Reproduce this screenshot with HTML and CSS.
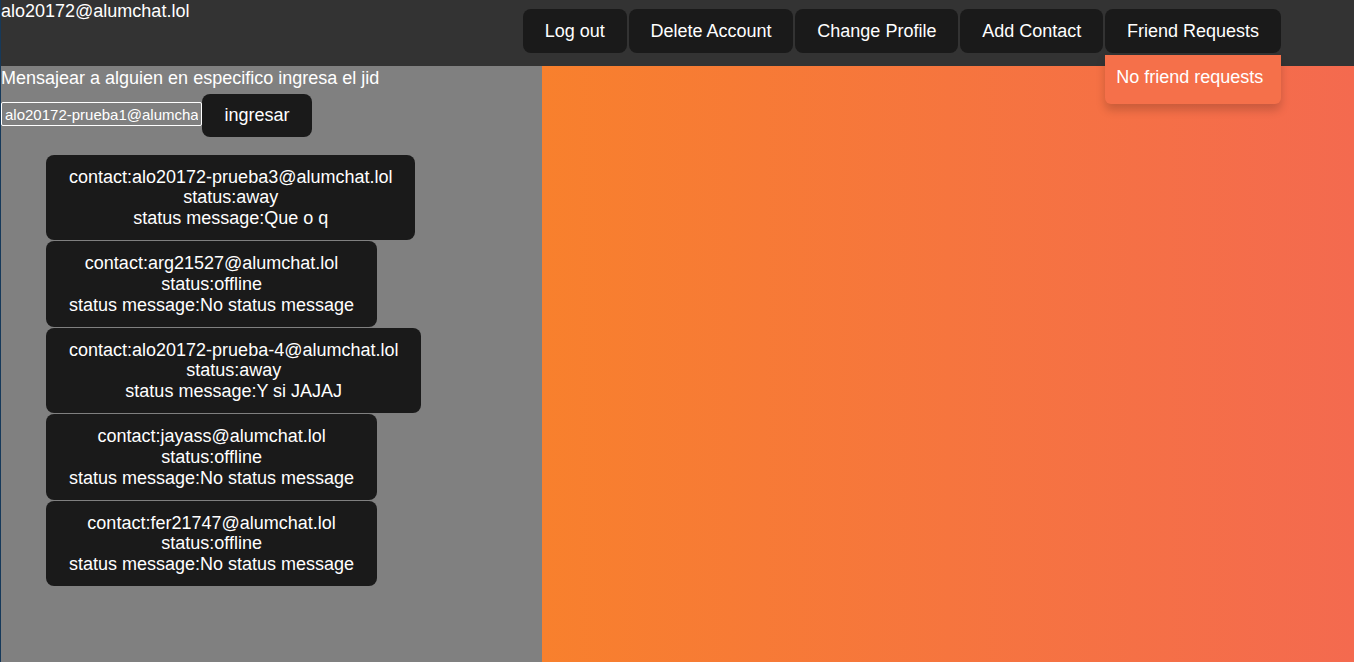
FILE: index.html
```html
<!DOCTYPE html>
<html>
<head>
<meta charset="utf-8">
<link rel="stylesheet" href="styles.css">
</head>
<body>
<div class="app">
  <header class="topbar">
    <div class="user">alo20172@alumchat.lol</div>
    <nav class="actions">
      <button class="btn">Log out</button>
      <button class="btn">Delete Account</button>
      <button class="btn">Change Profile</button>
      <button class="btn">Add Contact</button>
      <div class="dropdown">
        <button class="btn">Friend Requests</button>
        <div class="menu">No friend requests</div>
      </div>
    </nav>
  </header>
  <main class="main">
    <section class="side">
      <div class="hint">Mensajear a alguien en especifico ingresa el jid</div>
      <div class="jidrow">
        <input class="jid" type="text" value="alo20172-prueba1@alumchat.lol">
        <button class="btn">ingresar</button>
      </div>
      <div class="contacts">
        <button class="card">contact:alo20172-prueba3@alumchat.lol<br>status:away<br>status message:Que o q</button>
        <button class="card">contact:arg21527@alumchat.lol<br>status:offline<br>status message:No status message</button>
        <button class="card">contact:alo20172-prueba-4@alumchat.lol<br>status:away<br>status message:Y si JAJAJ</button>
        <button class="card">contact:jayass@alumchat.lol<br>status:offline<br>status message:No status message</button>
        <button class="card">contact:fer21747@alumchat.lol<br>status:offline<br>status message:No status message</button>
      </div>
    </section>
    <section class="chat"></section>
  </main>
</div>
</body>
</html>
```
FILE: styles.css
```css
* { box-sizing: border-box; }
html, body { margin: 0; padding: 0; height: 100%; }
body {
  font-family: "Liberation Sans", Arial, sans-serif;
  font-size: 18px;
  color: #fff;
  background: #333;
  border-left: 1px solid #16395a;
}
.app { display: flex; flex-direction: column; height: 662px; }
.topbar {
  height: 66px;
  background: #333;
  display: flex;
  justify-content: space-between;
  align-items: flex-start;
  position: relative;
  z-index: 2;
}
.user { line-height: 21px; margin-top: 1px; }
.actions {
  display: flex;
  gap: 2px;
  margin-top: 9px;
  margin-right: 73px;
}
.btn {
  font-family: "Liberation Sans", Arial, sans-serif;
  font-size: 18px;
  color: #fff;
  background: #1a1a1a;
  border: 1px solid transparent;
  border-radius: 8px;
  height: 44px;
  padding: 0 20.9px;
  white-space: nowrap;
  cursor: pointer;
}
.dropdown { position: relative; display: flex; }
.menu {
  position: absolute;
  top: 46px;
  left: 0;
  right: 0;
  height: 49px;
  padding: 12px 11px;
  line-height: 21px;
  background: #f5704a;
  border-radius: 0 0 6px 6px;
  box-shadow: 0 6px 10px rgba(0,0,0,0.18);
  white-space: nowrap;
}
.main { flex: 1; display: flex; }
.side {
  width: 541px;
  background: #808080;
  display: flex;
  flex-direction: column;
  align-items: flex-start;
}
.hint { line-height: 21px; margin-top: 2px; }
.jidrow { display: flex; align-items: flex-start; margin-top: 5px; }
.jid {
  width: 201px;
  height: 24px;
  margin-top: 8px;
  background: transparent;
  border: 1px solid #fff;
  border-radius: 2px;
  color: #fff;
  font-family: "Liberation Sans", Arial, sans-serif;
  font-size: 15px;
  padding: 0 3px;
}
.jidrow .btn { height: 43px; width: 110px; padding: 0; }
.contacts {
  display: flex;
  flex-direction: column;
  align-items: flex-start;
  gap: 1px;
  margin: 18px 0 0 45px;
}
.card {
  font-family: "Liberation Sans", Arial, sans-serif;
  font-size: 18px;
  line-height: 20.7px;
  color: #fff;
  background: #1a1a1a;
  border: 0;
  border-radius: 8px;
  padding: 11.7px 23px;
  text-align: center;
}
.chat {
  flex: 1;
  background: linear-gradient(to right, #f8802d, #f46a4f);
}
```
